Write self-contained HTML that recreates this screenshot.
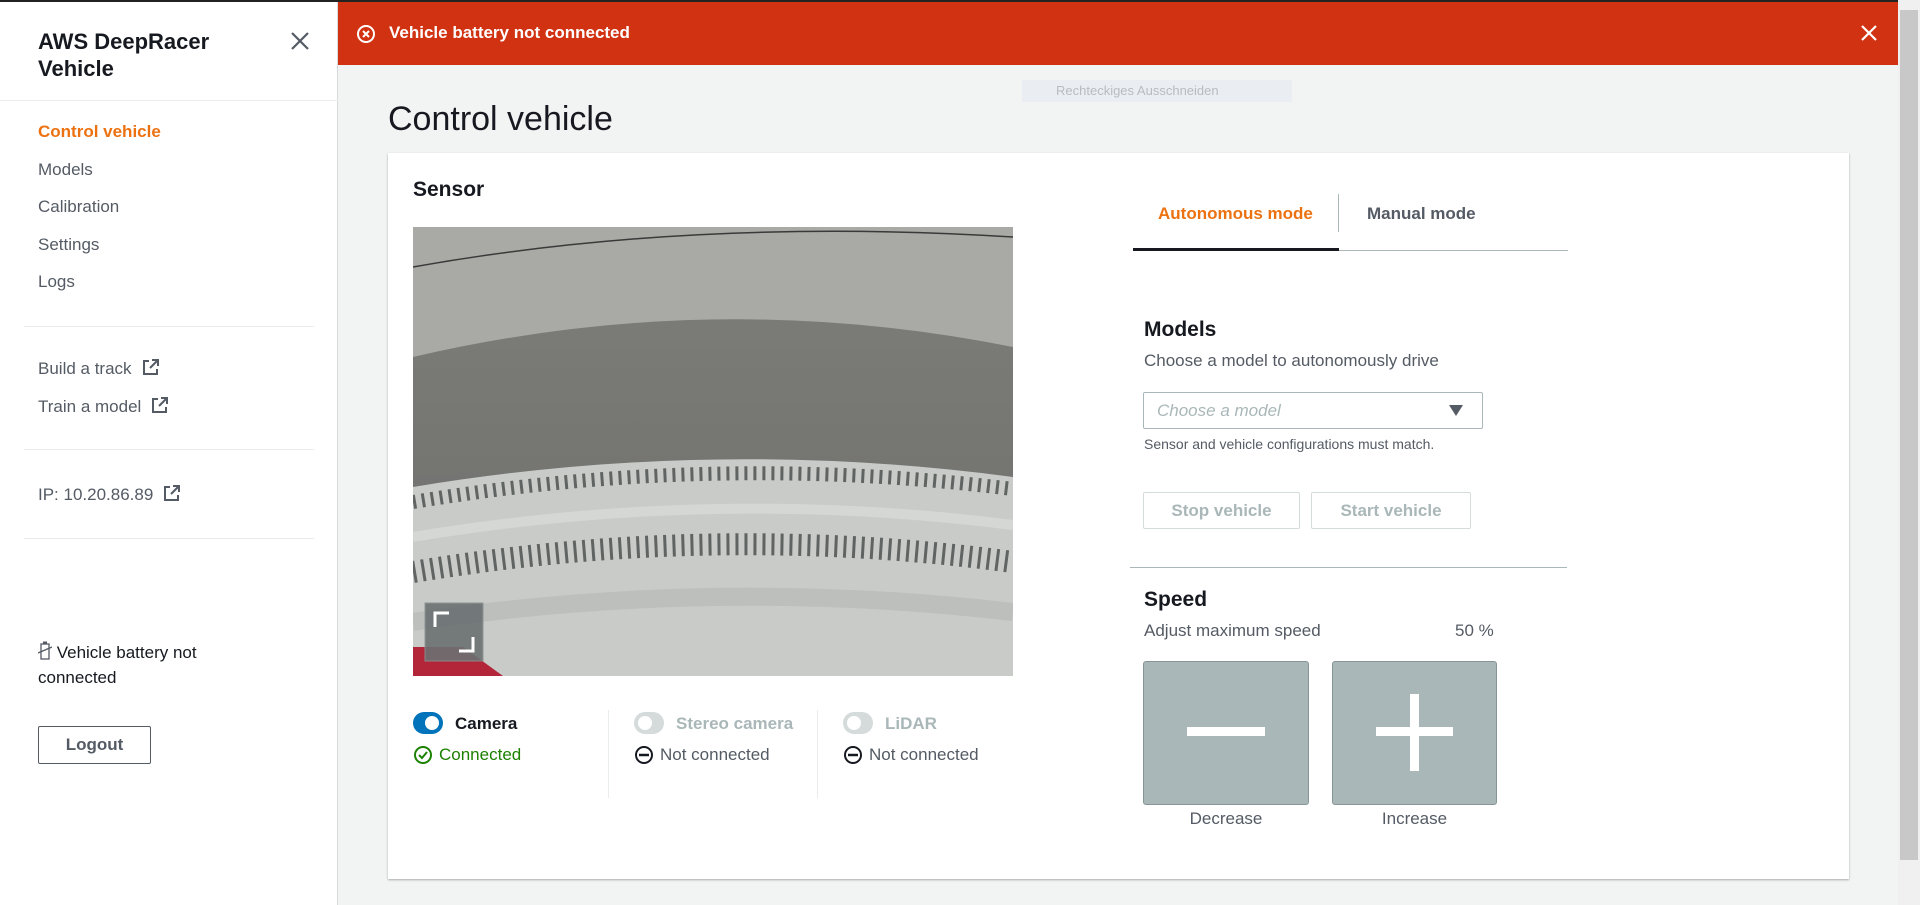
<!DOCTYPE html>
<html><head><meta charset="utf-8"><style>
*{box-sizing:border-box;margin:0;padding:0}
body{width:1920px;height:905px;overflow:hidden;font-family:"Liberation Sans",sans-serif;background:#f2f3f3;position:relative;color:#16191f}
.abs{position:absolute}
#topline{left:0;top:0;width:1920px;height:2px;background:#222}
#side{left:0;top:2px;width:338px;height:903px;background:#fff;border-right:1px solid #d5dbdb}
.hr{position:absolute;height:1px;background:#eaeded}
.nav{position:absolute;left:38px;font-size:17px;color:#545b64}
.ext{display:inline-block;vertical-align:-2px;margin-left:10px}
#banner{left:338px;top:2px;width:1560px;height:63px;background:#d13212;color:#fff;font-weight:bold;font-size:17px}
#sb{left:1898px;top:0;width:22px;height:905px;background:#f0f0f0}
#card{left:388px;top:153px;width:1461px;height:726px;background:#fff;box-shadow:0 1px 2px rgba(0,0,0,.3)}
.t17{font-size:17px}
.btn{position:absolute;border:1px solid #d5dbdb;background:#fff;color:#aab7b8;font-weight:bold;font-size:17px;text-align:center;border-radius:2px}
.big{position:absolute;background:#aab7b8;border:1px solid #879596;border-radius:3px}
</style></head><body>
<div id="topline" class="abs"></div>
<div id="side" class="abs">
  <div class="abs" style="left:38px;top:26px;font-size:22px;font-weight:bold;line-height:27px;color:#16191f">AWS DeepRacer<br>Vehicle</div>
  <svg class="abs" style="left:290px;top:29px" width="20" height="20" viewBox="0 0 20 20"><path d="M2 2L18 18M18 2L2 18" stroke="#545b64" stroke-width="2.2"/></svg>
  <div class="hr" style="left:0;top:98px;width:338px"></div>
  <div class="nav" style="top:120px;color:#ec7211;font-weight:bold">Control vehicle</div>
  <div class="nav" style="top:158px">Models</div>
  <div class="nav" style="top:195px">Calibration</div>
  <div class="nav" style="top:233px">Settings</div>
  <div class="nav" style="top:270px">Logs</div>
  <div class="hr" style="left:24px;top:324px;width:290px"></div>
  <div class="nav" style="top:357px">Build a track<svg class="ext" width="17" height="17" viewBox="0 0 17 17"><path d="M7 2H2v13h13v-5" fill="none" stroke="#545b64" stroke-width="2"/><path d="M10 1h6v6M16 1L8 9" fill="none" stroke="#545b64" stroke-width="2"/></svg></div>
  <div class="nav" style="top:395px">Train a model<svg class="ext" width="17" height="17" viewBox="0 0 17 17"><path d="M7 2H2v13h13v-5" fill="none" stroke="#545b64" stroke-width="2"/><path d="M10 1h6v6M16 1L8 9" fill="none" stroke="#545b64" stroke-width="2"/></svg></div>
  <div class="hr" style="left:24px;top:447px;width:290px"></div>
  <div class="nav" style="top:483px">IP: 10.20.86.89<svg class="ext" width="17" height="17" viewBox="0 0 17 17"><path d="M7 2H2v13h13v-5" fill="none" stroke="#545b64" stroke-width="2"/><path d="M10 1h6v6M16 1L8 9" fill="none" stroke="#545b64" stroke-width="2"/></svg></div>
  <div class="hr" style="left:24px;top:536px;width:290px"></div>
  <div class="abs" style="left:38px;top:638px;font-size:17px;line-height:25px;color:#16191f"><svg width="14" height="19" viewBox="0 0 14 19" style="vertical-align:-2px"><rect x="3" y="3" width="8" height="15" fill="none" stroke="#545b64" stroke-width="1.3"/><rect x="5" y="0.5" width="4" height="2.5" fill="#545b64"/><path d="M0 12L14 6" stroke="#545b64" stroke-width="1.3"/></svg> Vehicle battery not<br>connected</div>
  <div class="abs" style="left:38px;top:724px;width:113px;height:38px;border:1px solid #545b64;border-radius:2px;text-align:center;line-height:36px;font-weight:bold;font-size:17px;color:#545b64">Logout</div>
</div>
<div id="banner" class="abs">
  <svg class="abs" style="left:18px;top:22px" width="20" height="20" viewBox="0 0 20 20"><circle cx="10" cy="10" r="8" fill="none" stroke="#fff" stroke-width="2"/><path d="M7 7L13 13M13 7L7 13" stroke="#fff" stroke-width="2"/></svg>
  <div class="abs" style="left:51px;top:21px">Vehicle battery not connected</div>
  <svg class="abs" style="left:1522px;top:22px" width="18" height="18" viewBox="0 0 18 18"><path d="M2 2L16 16M16 2L2 16" stroke="#fff" stroke-width="2.2"/></svg>
</div>
<div id="sb" class="abs"><div class="abs" style="left:2px;top:10px;width:18px;height:850px;background:#c8c8c8"></div></div>
<div class="abs" style="left:1022px;top:80px;width:270px;height:22px;background:#eaeef2;color:#b8bcc0;font-size:13px;line-height:22px;padding-left:34px">Rechteckiges Ausschneiden</div>
<div class="abs" style="left:388px;top:100px;font-size:34px;color:#16191f">Control vehicle</div>
<div id="card" class="abs">
  <div class="abs" style="left:25px;top:25px;font-size:21px;font-weight:bold">Sensor</div>
  <svg class="abs" style="left:25px;top:74px" width="600" height="449" viewBox="0 0 600 449">
    <defs><linearGradient id="g1" x1="0" y1="0" x2="0" y2="1"><stop offset="0" stop-color="#7e7e7a"/><stop offset="1" stop-color="#6d6e6b"/></linearGradient></defs>
    <rect width="600" height="449" fill="url(#g1)"/>
    <path d="M0 0H600V120Q300 60 0 130Z" fill="#a9aaa5"/>
    <path d="M0 40Q280 -10 600 10" stroke="#3a3a3a" stroke-width="1.5" fill="none"/>
    <path d="M0 260Q300 210 600 250V449H0Z" fill="#c8cbc8"/>
    <g stroke="#606462" stroke-width="4">
      <path d="M0 275Q300 225 600 262" stroke-dasharray="3 6" stroke-width="14" fill="none"/>
      <path d="M0 345Q300 295 600 335" stroke-dasharray="3 6" stroke-width="22" fill="none"/>
    </g>
    <path d="M0 310Q300 260 600 298" stroke="#d4d7d4" stroke-width="10" fill="none"/>
    <path d="M0 395Q300 350 600 385" stroke="#bcbfbc" stroke-width="18" fill="none"/>
    <path d="M0 420H50L90 449H0Z" fill="#b3263a"/>
    <rect x="12" y="376" width="58" height="58" fill="#6b7172" opacity=".9" stroke="#8a9091"/>
    <path d="M22 400V386H36M60 410V424H46" stroke="#fff" stroke-width="3" fill="none"/>
  </svg>
  <svg class="abs" style="left:25px;top:559px" width="30" height="22"><rect width="30" height="22" rx="11" fill="#0073bb"/><circle cx="19" cy="11" r="7" fill="#fff"/></svg>
  <div class="abs" style="left:67px;top:561px;font-size:17px;font-weight:bold">Camera</div>
  <svg class="abs" style="left:25px;top:592px" width="20" height="20"><circle cx="10" cy="10" r="8" fill="none" stroke="#1d8102" stroke-width="2"/><path d="M6 10L9 13L14 7" fill="none" stroke="#1d8102" stroke-width="2"/></svg>
  <div class="abs" style="left:51px;top:592px;font-size:17px;color:#1d8102">Connected</div>
  <div class="abs" style="left:220px;top:557px;width:1px;height:88px;background:#eaeded"></div>
  <svg class="abs" style="left:246px;top:559px" width="30" height="22"><rect width="30" height="22" rx="11" fill="#d5dbdb"/><circle cx="11" cy="11" r="7" fill="#fff"/></svg>
  <div class="abs" style="left:288px;top:561px;font-size:17px;font-weight:bold;color:#aab7b8">Stereo camera</div>
  <svg class="abs" style="left:246px;top:592px" width="20" height="20"><circle cx="10" cy="10" r="8" fill="none" stroke="#16191f" stroke-width="2"/><path d="M5 10H15" stroke="#16191f" stroke-width="2.5"/></svg>
  <div class="abs" style="left:272px;top:592px;font-size:17px;color:#545b64">Not connected</div>
  <div class="abs" style="left:429px;top:557px;width:1px;height:88px;background:#eaeded"></div>
  <svg class="abs" style="left:455px;top:559px" width="30" height="22"><rect width="30" height="22" rx="11" fill="#d5dbdb"/><circle cx="11" cy="11" r="7" fill="#fff"/></svg>
  <div class="abs" style="left:497px;top:561px;font-size:17px;font-weight:bold;color:#aab7b8">LiDAR</div>
  <svg class="abs" style="left:455px;top:592px" width="20" height="20"><circle cx="10" cy="10" r="8" fill="none" stroke="#16191f" stroke-width="2"/><path d="M5 10H15" stroke="#16191f" stroke-width="2.5"/></svg>
  <div class="abs" style="left:481px;top:592px;font-size:17px;color:#545b64">Not connected</div>

  <div class="abs" style="left:770px;top:51px;font-size:17px;font-weight:bold;color:#ec7211">Autonomous mode</div>
  <div class="abs" style="left:950px;top:41px;width:1px;height:38px;background:#aab7b8"></div>
  <div class="abs" style="left:979px;top:51px;font-size:17px;font-weight:bold;color:#545b64">Manual mode</div>
  <div class="abs" style="left:745px;top:97px;width:435px;height:1px;background:#aab7b8"></div>
  <div class="abs" style="left:745px;top:95px;width:206px;height:3px;background:#16191f"></div>

  <div class="abs" style="left:756px;top:165px;font-size:21px;font-weight:bold">Models</div>
  <div class="abs" style="left:756px;top:198px" class="t17"><span style="font-size:17px;color:#545b64">Choose a model to autonomously drive</span></div>
  <div class="abs" style="left:755px;top:239px;width:340px;height:37px;border:1px solid #aab7b8;border-radius:2px"><span class="abs" style="left:13px;top:8px;font-size:17px;font-style:italic;color:#aab7b8">Choose a model</span><svg class="abs" style="left:305px;top:12px" width="14" height="11"><path d="M0 0H14L7 11Z" fill="#545b64"/></svg></div>
  <div class="abs" style="left:756px;top:283px;font-size:14px;color:#545b64">Sensor and vehicle configurations must match.</div>
  <div class="btn" style="left:755px;top:339px;width:157px;height:37px;line-height:35px">Stop vehicle</div>
  <div class="btn" style="left:923px;top:339px;width:160px;height:37px;line-height:35px">Start vehicle</div>
  <div class="abs" style="left:742px;top:414px;width:437px;height:1px;background:#aab7b8"></div>
  <div class="abs" style="left:756px;top:435px;font-size:21px;font-weight:bold">Speed</div>
  <div class="abs" style="left:756px;top:468px;font-size:17px;color:#545b64">Adjust maximum speed</div>
  <div class="abs" style="left:1067px;top:468px;font-size:17px;color:#545b64">50 %</div>
  <div class="big" style="left:755px;top:508px;width:166px;height:144px"><div class="abs" style="left:43px;top:65px;width:78px;height:9px;background:#fff"></div></div>
  <div class="big" style="left:944px;top:508px;width:165px;height:144px"><div class="abs" style="left:43px;top:65px;width:77px;height:9px;background:#fff"></div><div class="abs" style="left:77px;top:32px;width:9px;height:77px;background:#fff"></div></div>
  <div class="abs" style="left:755px;top:656px;width:166px;text-align:center;font-size:17px;color:#545b64">Decrease</div>
  <div class="abs" style="left:944px;top:656px;width:165px;text-align:center;font-size:17px;color:#545b64">Increase</div>
</div>
</body></html>
